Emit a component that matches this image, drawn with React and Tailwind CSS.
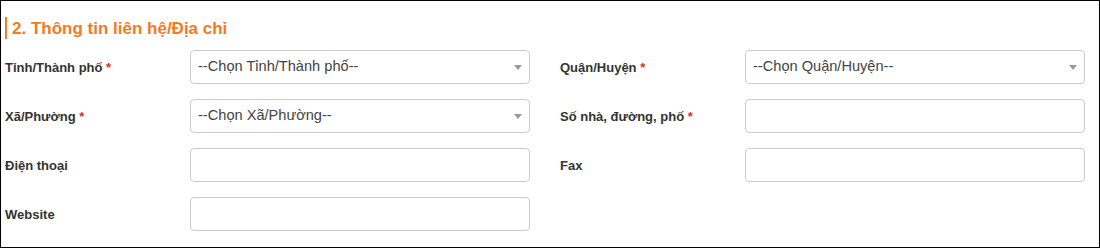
import { ChevronDown } from "lucide-react";

const fields = [
    { label: "Tỉnh/Thành phố", required: true, type: "select", placeholder: "--Chọn Tỉnh/Thành phố--" },
    { label: "Quận/Huyện", required: true, type: "select", placeholder: "--Chọn Quận/Huyện--" },
    { label: "Xã/Phường", required: true, type: "select", placeholder: "--Chọn Xã/Phường--" },
    { label: "Số nhà, đường, phố", required: true, type: "input" },
    { label: "Điện thoại", type: "input" },
    { label: "Fax", type: "input" },
    { label: "Website", type: "input" },
];

const Field = ({ field }) => (
    <div className="flex items-center">
        <label className="w-[185px] shrink-0 pt-[2px] text-[13px] font-bold text-[#333]">
            {field.label}
            {field.required && <span className="text-[#d9302c]"> *</span>}
        </label>
        {field.type === "select" ? (
            <div className="relative w-[340px] h-[34px] border border-[#ccc] rounded-[4px] bg-white flex items-center pl-[7px] text-[14.6px] text-[#444]">
                <span>{field.placeholder}</span>
                <span className="absolute right-[7px] top-[14px] w-0 h-0 border-l-[4px] border-r-[4px] border-t-[5px] border-l-transparent border-r-transparent border-t-[#999]" />
            </div>
        ) : (
            <input className="w-[340px] h-[34px] border border-[#ccc] rounded-[4px] bg-white px-2 text-[14px] outline-none" />
        )}
    </div>
);

export default function App() {
    return (
        <div
            className="w-[1100px] h-[248px] border border-black bg-white"
            style={{ fontFamily: '"Liberation Sans", Arial, sans-serif' }}
        >
            <div className="pl-[4px] pr-[15px]">
                <div className="mt-[16px] flex items-center h-[22px]">
                    <div className="w-[2px] h-[22px] bg-[#f37b21]" />
                    <h2 className="ml-[5px] text-[17px] font-bold text-[#f37b21] leading-none">
                        2. Thông tin liên hệ/Địa chỉ
                    </h2>
                </div>

                {/* FORM */}
                <div className="mt-[11px] grid grid-cols-[525px_525px] gap-x-[30px] gap-y-[15px]">
                    {fields.map((f) => (
                        <Field key={f.label} field={f} />
                    ))}
                </div>
            </div>
        </div>
    );
}
